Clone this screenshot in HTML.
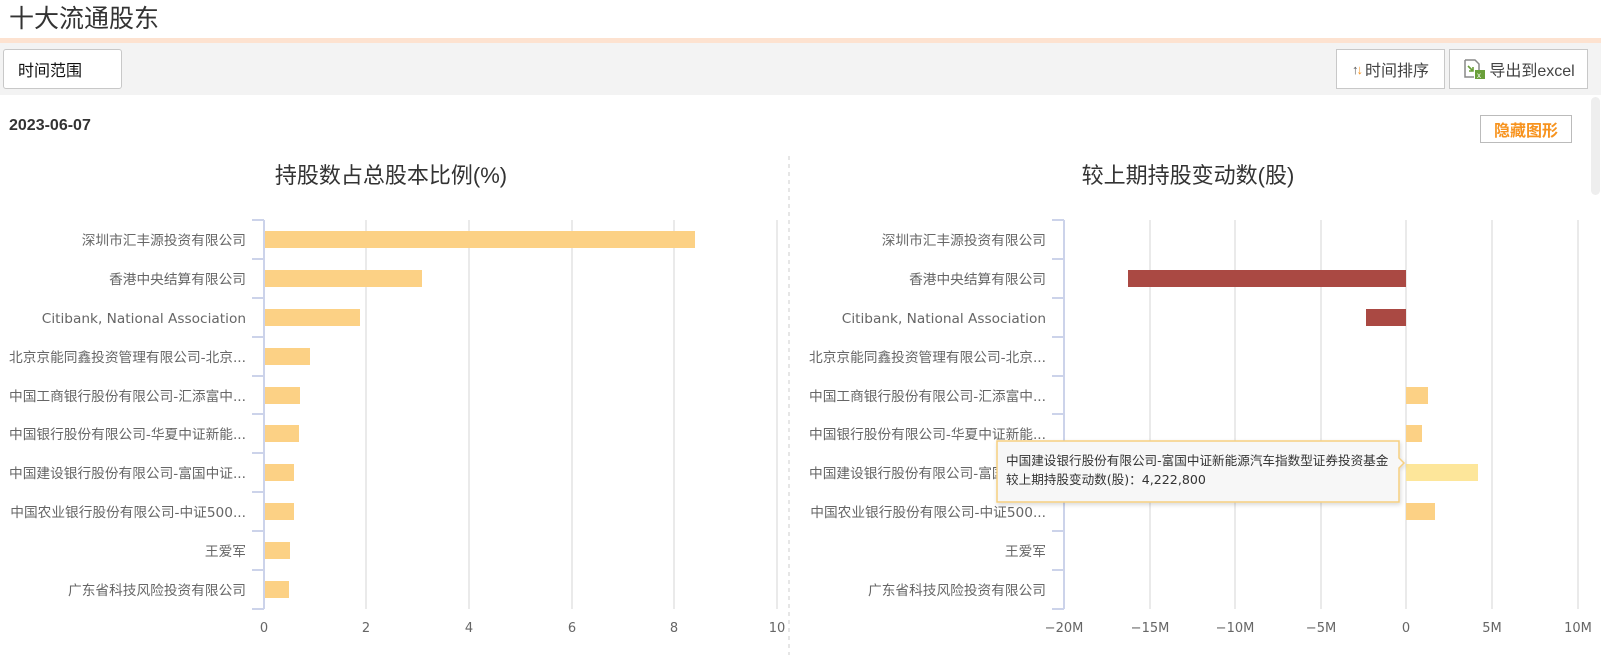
<!DOCTYPE html>
<html><head><meta charset="utf-8"><style>
body{margin:0;width:1601px;height:660px;overflow:hidden;background:#fff;font-family:"Liberation Sans","Noto Sans CJK SC",sans-serif;position:relative}
.abs{position:absolute}
.btn{position:absolute;background:#fff;border:1px solid #c8c8c8;box-sizing:border-box;font-size:16px;color:#333;display:flex;align-items:center;justify-content:center}
</style></head><body>
<div class="abs" style="left:9px;top:3px;font-size:25px;color:#333;line-height:32px">十大流通股东</div>
<div class="abs" style="left:0;top:38px;width:1601px;height:5px;background:#fde2d0"></div>
<div class="abs" style="left:0;top:43px;width:1601px;height:52px;background:#f3f3f3"></div>
<div class="btn" style="left:3px;top:49px;width:119px;height:40px;border-radius:3px;justify-content:flex-start;padding-left:14px;color:#111">时间范围</div>
<div class="btn" style="left:1336px;top:49px;width:109px;height:40px;color:#444"><span style="font-size:13px;color:#555;letter-spacing:-2px">↑</span><span style="font-size:13px;color:#f7931e;margin-right:2px">↓</span>时间排序</div>
<div class="btn" style="left:1449px;top:49px;width:139px;height:40px;color:#444">
<svg width="24" height="22" viewBox="0 0 24 22" style="margin-right:3px"><path d="M3 2h10l4 4v9" fill="none" stroke="#888" stroke-width="1.5"/><path d="M3 2v17h9" fill="none" stroke="#888" stroke-width="1.5"/><path d="M6 8l5 5M11 9v4h-4" fill="none" stroke="#6a9f3a" stroke-width="1.6"/><rect x="13" y="12" width="10" height="9" fill="#6a9f3a"/><text x="15" y="20" font-size="8" fill="#fff" font-family="Liberation Sans">x</text></svg>导出到excel</div>
<div class="abs" style="left:9px;top:117px;font-size:16px;font-weight:bold;color:#333">2023-06-07</div>
<div class="btn" style="left:1480px;top:115px;width:92px;height:28px;color:#f7931e;font-weight:bold;border-color:#bbb">隐藏图形</div>
<div class="abs" style="left:1591px;top:97px;width:9px;height:98px;background:#eee;border-radius:5px"></div>
<svg class="abs" style="left:0;top:0" width="1601" height="660" font-family="DejaVu Sans, Noto Sans CJK SC, sans-serif">
<defs><filter id="sh" x="-5%" y="-20%" width="110%" height="150%"><feDropShadow dx="1" dy="2" stdDeviation="2" flood-color="#000" flood-opacity="0.15"/></filter></defs>
<line x1="789" y1="156" x2="789" y2="655" stroke="#ccc" stroke-dasharray="4,4"/>
<text x="391" y="183" font-size="22" fill="#333" text-anchor="middle" font-family="Liberation Sans, Noto Sans CJK SC, sans-serif">持股数占总股本比例(%)</text>
<text x="1188" y="183" font-size="22" fill="#333" text-anchor="middle" font-family="Liberation Sans, Noto Sans CJK SC, sans-serif">较上期持股变动数(股)</text>
<g stroke="#e3e3e3" stroke-width="1.5">
<line x1="366" y1="220" x2="366" y2="609"/><line x1="469" y1="220" x2="469" y2="609"/><line x1="572" y1="220" x2="572" y2="609"/><line x1="674" y1="220" x2="674" y2="609"/><line x1="777" y1="220" x2="777" y2="609"/>
<line x1="1150" y1="220" x2="1150" y2="609"/><line x1="1235" y1="220" x2="1235" y2="609"/><line x1="1321" y1="220" x2="1321" y2="609"/><line x1="1406" y1="220" x2="1406" y2="609"/><line x1="1492" y1="220" x2="1492" y2="609"/><line x1="1578" y1="220" x2="1578" y2="609"/>
</g>
<g stroke="#ccd3ea" stroke-width="2">
<line x1="264" y1="220" x2="264" y2="609"/><line x1="1064" y1="220" x2="1064" y2="609"/>
<path d="M252 220h12M252 259h12M252 298h12M252 337h12M252 376h12M252 414h12M252 453h12M252 492h12M252 531h12M252 570h12M252 609h12"/>
<path d="M1052 220h12M1052 259h12M1052 298h12M1052 337h12M1052 376h12M1052 414h12M1052 453h12M1052 492h12M1052 531h12M1052 570h12M1052 609h12"/>
</g>
<g fill="#fcd185">
<rect x="265" y="231" width="430" height="17"/><rect x="265" y="270" width="157" height="17"/><rect x="265" y="309" width="95" height="17"/><rect x="265" y="348" width="45" height="17"/><rect x="265" y="387" width="35" height="17"/><rect x="265" y="425" width="34" height="17"/><rect x="265" y="464" width="29" height="17"/><rect x="265" y="503" width="29" height="17"/><rect x="265" y="542" width="25" height="17"/><rect x="265" y="581" width="24" height="17"/>
<rect x="1406" y="387" width="22" height="17"/><rect x="1406" y="425" width="16" height="17"/><rect x="1406" y="503" width="29" height="17"/>
</g>
<rect x="1406" y="464" width="72" height="17" fill="#fde69a"/>
<g fill="#aa4943"><rect x="1128" y="270" width="278" height="17"/><rect x="1366" y="309" width="40" height="17"/></g>
<g font-size="13.7" fill="#666" text-anchor="end">
<text x="246" y="245">深圳市汇丰源投资有限公司</text><text x="246" y="284">香港中央结算有限公司</text><text x="246" y="323">Citibank, National Association</text><text x="246" y="362">北京京能同鑫投资管理有限公司-北京...</text><text x="246" y="401">中国工商银行股份有限公司-汇添富中...</text><text x="246" y="439">中国银行股份有限公司-华夏中证新能...</text><text x="246" y="478">中国建设银行股份有限公司-富国中证...</text><text x="246" y="517">中国农业银行股份有限公司-中证500...</text><text x="246" y="556">王爱军</text><text x="246" y="595">广东省科技风险投资有限公司</text>
<text x="1046" y="245">深圳市汇丰源投资有限公司</text><text x="1046" y="284">香港中央结算有限公司</text><text x="1046" y="323">Citibank, National Association</text><text x="1046" y="362">北京京能同鑫投资管理有限公司-北京...</text><text x="1046" y="401">中国工商银行股份有限公司-汇添富中...</text><text x="1046" y="439">中国银行股份有限公司-华夏中证新能...</text><text x="1046" y="478">中国建设银行股份有限公司-富国中证...</text><text x="1046" y="517">中国农业银行股份有限公司-中证500...</text><text x="1046" y="556">王爱军</text><text x="1046" y="595">广东省科技风险投资有限公司</text>
</g>
<g font-size="13" fill="#666" text-anchor="middle">
<text x="264" y="632">0</text><text x="366" y="632">2</text><text x="469" y="632">4</text><text x="572" y="632">6</text><text x="674" y="632">8</text><text x="777" y="632">10</text>
<text x="1064" y="632">−20M</text><text x="1150" y="632">−15M</text><text x="1235" y="632">−10M</text><text x="1321" y="632">−5M</text><text x="1406" y="632">0</text><text x="1492" y="632">5M</text><text x="1578" y="632">10M</text>
</g>
<path d="M997 441h402v17l5 5-5 5v34h-402z" fill="#f7f7f7" stroke="#f6cf80" stroke-width="1.5" filter="url(#sh)"/>
<text x="1006" y="465" font-size="12.6" fill="#333">中国建设银行股份有限公司-富国中证新能源汽车指数型证券投资基金</text>
<text x="1006" y="484" font-size="12.6" fill="#333">较上期持股变动数(股)：4,222,800</text>
</svg>
</body></html>
